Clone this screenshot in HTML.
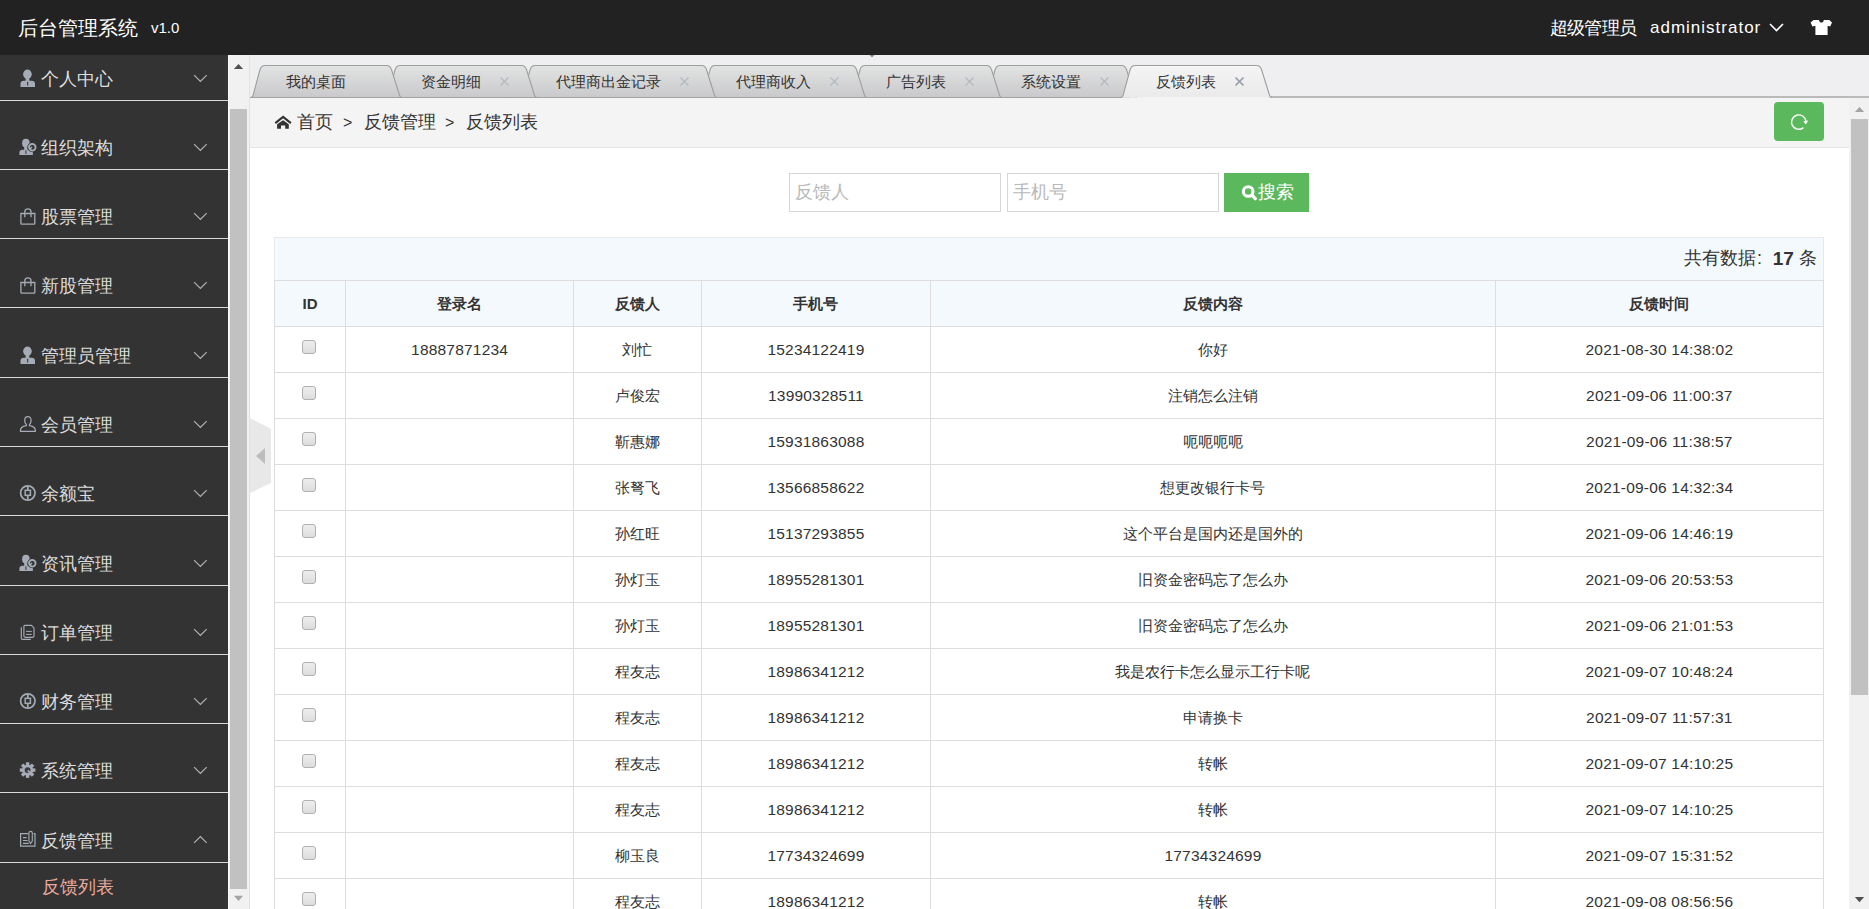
<!DOCTYPE html>
<html><head><meta charset="utf-8"><title>后台管理系统</title>
<style>
*{margin:0;padding:0;box-sizing:border-box}
html,body{width:1869px;height:909px;overflow:hidden;background:#fff;font-family:"Liberation Sans",sans-serif;color:#333}
.abs{position:absolute}
#hdr{position:absolute;left:0;top:0;width:1869px;height:55px;background:#222}
#title{position:absolute;left:18px;top:14px;font-size:20px;line-height:28px;color:#fff;white-space:nowrap}
#ver{position:absolute;left:151px;top:18px;font-size:15px;line-height:20px;color:#fff}
#role{position:absolute;left:1549.5px;top:15px;font-size:18px;line-height:26px;color:#fff;white-space:nowrap;letter-spacing:-0.6px}
#admin{position:absolute;left:1650px;top:15px;font-size:17px;line-height:26px;color:#fff;letter-spacing:1px;white-space:nowrap}
#side{position:absolute;left:0;top:55px;width:228px;height:854px;background:#333;overflow:hidden}
.sline{position:absolute;left:0;width:228px;height:1px;background:#d9d9d9}
.sicon{position:absolute;left:16px;width:24px;height:24px}
.sicon svg{display:block}
.stext{position:absolute;left:41px;font-size:18px;line-height:24px;color:#ddd;white-space:nowrap}
.stext.sub{left:42px;color:#eba99e}
.schev{position:absolute;left:193px;width:15px;height:9px}
.schev svg{display:block}
#sscroll{position:absolute;left:228px;top:55px;width:21px;height:854px;background:#f1f1f1;border-left:1px solid #fafafa}
#sthumb{position:absolute;left:230px;top:109px;width:17px;height:780px;background:#c1c1c1}
#sline2{position:absolute;left:249px;top:55px;width:1px;height:854px;background:#e2e2e2}
#tabs{position:absolute;left:250px;top:55px;width:1619px;height:42px;background:#efeff1}
.tabsvg{position:absolute;left:249px;top:55px}
#tabline{position:absolute;left:1271px;top:96.5px;width:598px;height:1px;background:#a9a9a9}
.tlab{position:absolute;top:71px;font-size:15px;line-height:22px;color:#333;white-space:nowrap}
.tclose{position:absolute;top:77px;width:9px;height:9px}
.tclose svg{display:block}
#crumb{position:absolute;left:250px;top:98px;width:1599px;height:50px;background:#f4f4f4;border-bottom:1px solid #e6e6e6}
.ctext{position:absolute;top:110px;font-size:18px;line-height:24px;color:#333;white-space:nowrap}
#refresh{position:absolute;left:1774px;top:102px;width:50px;height:39px;background:#5cb85c;border-radius:4px}
#content{position:absolute;left:250px;top:148px;width:1599px;height:761px;background:#fff}
#rscroll{position:absolute;left:1849px;top:98px;width:20px;height:811px;background:#f1f1f1}
#rthumb{position:absolute;left:1851px;top:119px;width:17px;height:576px;background:#c1c1c1}
.inp{position:absolute;top:173px;height:39px;border:1px solid #d6d6d6;background:#fff}
.ph{position:absolute;top:180px;font-size:18px;line-height:24px;color:#b9b9b9;white-space:nowrap}
#sbtn{position:absolute;left:1224px;top:173px;width:85px;height:39px;background:#5cb85c}
#tool{position:absolute;left:274px;top:237px;width:1550px;height:89px;background:#f3f9fd;border:1px solid #e8e8e8;border-bottom:none}
.vl{position:absolute;top:280px;width:1px;height:629px;background:#dddddd}
.hl{position:absolute;left:274px;width:1550px;height:1px;background:#dddddd}
.hcell,.cell{position:absolute;top:0;height:46px;line-height:47px;text-align:center;white-space:nowrap;font-size:15px;color:#333}
.hcell{top:280px;font-weight:bold}
.row{position:absolute;left:0;width:1869px;height:46px}
.n{font-size:15.5px;letter-spacing:0.2px}
.cb{position:absolute;left:27.5px;top:14px;width:14px;height:14px;border:1px solid #b0b0b0;border-radius:3px;background:linear-gradient(#eeeeee,#dddddd)}
#handle{position:absolute;left:250px;top:418px}
</style></head><body>
<div id="hdr">
  <div id="title">后台管理系统</div>
  <div id="ver">v1.0</div>
  <div id="role">超级管理员</div>
  <div id="admin">administrator</div>
  <svg class="abs" style="left:1769px;top:23px" width="15" height="9" viewBox="0 0 15 9"><path d="M1 1l6.5 6.5L14 1" fill="none" stroke="#fff" stroke-width="1.6"/></svg>
  <svg class="abs" style="left:1810px;top:19px" width="23" height="16" viewBox="0 0 23 16"><path fill="#fff" d="M0.6 3.6L3.5 0.9H8.9C9.5 2.7 10.3 3.6 11.4 3.6C12.5 3.6 13.3 2.7 13.9 0.9H19.3L22 3.6L20.2 7.6L17.6 6.8V15.9H5.4V6.8L2.4 7.6Z"/></svg>
</div>
<div id="side">
<div class="sline" style="top:45.00px"></div><div class="sicon" style="top:11.30px"><svg width="24" height="24" viewBox="0 0 24 24"><ellipse cx="11.45" cy="8.3" rx="4.3" ry="4.7" fill="#a5acb6"/><path fill="#a5acb6" d="M9.6 11.5h3.7v3.5H9.6z"/><path fill="#a5acb6" d="M4.5 21.1V17.6C4.5 15.9 5.9 14.8 7.6 14.8H15.9C17.6 14.8 19 15.9 19 17.6V21.1z"/><path fill="#3a3a3a" d="M11.1 15.8h1.1v3.7h-1.1z"/></svg></div><div class="stext" style="top:11.70px">个人中心</div><div class="schev" style="top:19.20px"><svg width="15" height="9" viewBox="0 0 15 9"><path d="M1.1 1.2l6.3 6.3 6.3-6.3" fill="none" stroke="#b4b4b4" stroke-width="1.2"/></svg></div><div class="sline" style="top:114.00px"></div><div class="sicon" style="top:81.30px"><svg width="24" height="24" viewBox="0 0 24 24"><ellipse cx="9.9" cy="7.2" rx="3.8" ry="4.4" fill="#a5acb6"/><path fill="#a5acb6" d="M8.2 10.5h3.4v3.5H8.2z"/><path fill="#a5acb6" d="M3.4 19V16.4C3.4 14.8 4.7 13.7 6.3 13.7H14C15.6 13.7 16.9 14.8 16.9 16.4V19z"/><path fill="#3a3a3a" d="M9.4 14.3h1v3.8h-1z"/><circle cx="16.3" cy="11.3" r="4.9" fill="#333"/><circle cx="16.3" cy="11.3" r="3.3" fill="none" stroke="#a5acb6" stroke-width="1.8"/><path d="M13.6 13.2l2.4-2" stroke="#a5acb6" stroke-width="1.6"/></svg></div><div class="stext" style="top:80.70px">组织架构</div><div class="schev" style="top:88.20px"><svg width="15" height="9" viewBox="0 0 15 9"><path d="M1.1 1.2l6.3 6.3 6.3-6.3" fill="none" stroke="#b4b4b4" stroke-width="1.2"/></svg></div><div class="sline" style="top:183.00px"></div><div class="sicon" style="top:149.30px"><svg width="24" height="24" viewBox="0 0 24 24"><path fill="none" stroke="#a5acb6" stroke-width="1.3" d="M4.9 9.5H18.8V19.5Q18.8 20.2 18.1 20.2H5.6Q4.9 20.2 4.9 19.5Z M8.8 13.2V8A3.1 3.1 0 0 1 15 8V13.2"/></svg></div><div class="stext" style="top:149.70px">股票管理</div><div class="schev" style="top:157.20px"><svg width="15" height="9" viewBox="0 0 15 9"><path d="M1.1 1.2l6.3 6.3 6.3-6.3" fill="none" stroke="#b4b4b4" stroke-width="1.2"/></svg></div><div class="sline" style="top:252.00px"></div><div class="sicon" style="top:218.30px"><svg width="24" height="24" viewBox="0 0 24 24"><path fill="none" stroke="#a5acb6" stroke-width="1.3" d="M4.9 9.5H18.8V19.5Q18.8 20.2 18.1 20.2H5.6Q4.9 20.2 4.9 19.5Z M8.8 13.2V8A3.1 3.1 0 0 1 15 8V13.2"/></svg></div><div class="stext" style="top:218.70px">新股管理</div><div class="schev" style="top:226.20px"><svg width="15" height="9" viewBox="0 0 15 9"><path d="M1.1 1.2l6.3 6.3 6.3-6.3" fill="none" stroke="#b4b4b4" stroke-width="1.2"/></svg></div><div class="sline" style="top:322.00px"></div><div class="sicon" style="top:288.30px"><svg width="24" height="24" viewBox="0 0 24 24"><ellipse cx="11.45" cy="8.3" rx="4.3" ry="4.7" fill="#a5acb6"/><path fill="#a5acb6" d="M9.6 11.5h3.7v3.5H9.6z"/><path fill="#a5acb6" d="M4.5 21.1V17.6C4.5 15.9 5.9 14.8 7.6 14.8H15.9C17.6 14.8 19 15.9 19 17.6V21.1z"/><path fill="#3a3a3a" d="M11.1 15.8h1.1v3.7h-1.1z"/></svg></div><div class="stext" style="top:288.70px">管理员管理</div><div class="schev" style="top:296.20px"><svg width="15" height="9" viewBox="0 0 15 9"><path d="M1.1 1.2l6.3 6.3 6.3-6.3" fill="none" stroke="#b4b4b4" stroke-width="1.2"/></svg></div><div class="sline" style="top:391.00px"></div><div class="sicon" style="top:357.30px"><svg width="24" height="24" viewBox="0 0 24 24"><path fill="none" stroke="#a5acb6" stroke-width="1.25" d="M11.9 4.6C9.9 4.6 8.7 6.1 8.7 8.4C8.7 10.2 9.4 11.5 10.3 12.4V13.7C7.2 14.2 4.5 15.6 4.5 18.4V19.4H19.3V18.4C19.3 15.6 16.6 14.2 13.5 13.7V12.4C14.4 11.5 15.1 10.2 15.1 8.4C15.1 6.1 13.9 4.6 11.9 4.6Z"/></svg></div><div class="stext" style="top:357.70px">会员管理</div><div class="schev" style="top:365.20px"><svg width="15" height="9" viewBox="0 0 15 9"><path d="M1.1 1.2l6.3 6.3 6.3-6.3" fill="none" stroke="#b4b4b4" stroke-width="1.2"/></svg></div><div class="sline" style="top:460.00px"></div><div class="sicon" style="top:426.30px"><svg width="24" height="24" viewBox="0 0 24 24"><circle cx="11.8" cy="12" r="7.2" fill="none" stroke="#a5acb6" stroke-width="1.7"/><rect x="9.2" y="9.3" width="5.2" height="5" fill="#333" stroke="#a5acb6" stroke-width="1.5"/><path stroke="#a5acb6" stroke-width="1.7" d="M11.8 5.2V9.3M11.8 14.3V18.8"/></svg></div><div class="stext" style="top:426.70px">余额宝</div><div class="schev" style="top:434.20px"><svg width="15" height="9" viewBox="0 0 15 9"><path d="M1.1 1.2l6.3 6.3 6.3-6.3" fill="none" stroke="#b4b4b4" stroke-width="1.2"/></svg></div><div class="sline" style="top:530.00px"></div><div class="sicon" style="top:497.30px"><svg width="24" height="24" viewBox="0 0 24 24"><ellipse cx="9.9" cy="7.2" rx="3.8" ry="4.4" fill="#a5acb6"/><path fill="#a5acb6" d="M8.2 10.5h3.4v3.5H8.2z"/><path fill="#a5acb6" d="M3.4 19V16.4C3.4 14.8 4.7 13.7 6.3 13.7H14C15.6 13.7 16.9 14.8 16.9 16.4V19z"/><path fill="#3a3a3a" d="M9.4 14.3h1v3.8h-1z"/><circle cx="16.3" cy="11.3" r="4.9" fill="#333"/><circle cx="16.3" cy="11.3" r="3.3" fill="none" stroke="#a5acb6" stroke-width="1.8"/><path d="M13.6 13.2l2.4-2" stroke="#a5acb6" stroke-width="1.6"/></svg></div><div class="stext" style="top:496.70px">资讯管理</div><div class="schev" style="top:504.20px"><svg width="15" height="9" viewBox="0 0 15 9"><path d="M1.1 1.2l6.3 6.3 6.3-6.3" fill="none" stroke="#b4b4b4" stroke-width="1.2"/></svg></div><div class="sline" style="top:599.00px"></div><div class="sicon" style="top:565.30px"><svg width="24" height="24" viewBox="0 0 24 24"><path fill="none" stroke="#a5acb6" stroke-width="1.15" d="M5.3 7.2V18.2Q5.3 19.4 6.5 19.4H14.8"/><path fill="none" stroke="#a5acb6" stroke-width="1.15" d="M8.9 5.3H15.4L18 7.9V16.1Q18 17.3 16.8 17.3H9.1Q7.9 17.3 7.9 16.1V6.3Q7.9 5.3 8.9 5.3Z"/><path stroke="#a5acb6" stroke-width="1" d="M10 11.4h5.8M10 14.4h5.8"/></svg></div><div class="stext" style="top:565.70px">订单管理</div><div class="schev" style="top:573.20px"><svg width="15" height="9" viewBox="0 0 15 9"><path d="M1.1 1.2l6.3 6.3 6.3-6.3" fill="none" stroke="#b4b4b4" stroke-width="1.2"/></svg></div><div class="sline" style="top:668.00px"></div><div class="sicon" style="top:634.30px"><svg width="24" height="24" viewBox="0 0 24 24"><circle cx="11.8" cy="12" r="7.2" fill="none" stroke="#a5acb6" stroke-width="1.7"/><rect x="9.2" y="9.3" width="5.2" height="5" fill="#333" stroke="#a5acb6" stroke-width="1.5"/><path stroke="#a5acb6" stroke-width="1.7" d="M11.8 5.2V9.3M11.8 14.3V18.8"/></svg></div><div class="stext" style="top:634.70px">财务管理</div><div class="schev" style="top:642.20px"><svg width="15" height="9" viewBox="0 0 15 9"><path d="M1.1 1.2l6.3 6.3 6.3-6.3" fill="none" stroke="#b4b4b4" stroke-width="1.2"/></svg></div><div class="sline" style="top:737.00px"></div><div class="sicon" style="top:703.30px"><svg width="24" height="24" viewBox="0 0 24 24"><g transform="translate(11.6 12.1)" fill="#a5acb6"><circle r="5.6"/><rect x="-1.7" y="-7.8" width="3.4" height="3.6" transform="rotate(0)"/><rect x="-1.7" y="-7.8" width="3.4" height="3.6" transform="rotate(45)"/><rect x="-1.7" y="-7.8" width="3.4" height="3.6" transform="rotate(90)"/><rect x="-1.7" y="-7.8" width="3.4" height="3.6" transform="rotate(135)"/><rect x="-1.7" y="-7.8" width="3.4" height="3.6" transform="rotate(180)"/><rect x="-1.7" y="-7.8" width="3.4" height="3.6" transform="rotate(225)"/><rect x="-1.7" y="-7.8" width="3.4" height="3.6" transform="rotate(270)"/><rect x="-1.7" y="-7.8" width="3.4" height="3.6" transform="rotate(315)"/><circle r="2.9" fill="#3a3a3a"/><path d="M-0.6 0.9L3.9 5.2 5.1 4 0.7 -0.4z" /></g></svg></div><div class="stext" style="top:703.70px">系统管理</div><div class="schev" style="top:711.20px"><svg width="15" height="9" viewBox="0 0 15 9"><path d="M1.1 1.2l6.3 6.3 6.3-6.3" fill="none" stroke="#b4b4b4" stroke-width="1.2"/></svg></div><div class="sline" style="top:807.00px"></div><div class="sicon" style="top:773.30px"><svg width="24" height="24" viewBox="0 0 24 24"><path fill="none" stroke="#a5acb6" stroke-width="1.2" d="M12 5.6H4.6V18.2H19V5.6H17.6"/><path stroke="#a5acb6" stroke-width="1.1" d="M6.9 9.6h3.7M6.9 12.5h4.7M6.9 15.4h5.8"/><path fill="none" stroke="#a5acb6" stroke-width="1.1" d="M12.9 13V5.1Q12.9 3.4 14.6 3.4Q16.3 3.4 16.3 5.1V13L14.6 15.6Z"/></svg></div><div class="stext" style="top:773.70px">反馈管理</div><div class="schev" style="top:780.20px"><svg width="15" height="9" viewBox="0 0 15 9"><path d="M1.1 7.8l6.3-6.3 6.3 6.3" fill="none" stroke="#b4b4b4" stroke-width="1.2"/></svg></div><div class="stext sub" style="top:819.50px">反馈列表</div>
</div>
<div id="sscroll"></div>
<div id="sthumb"></div>
<svg class="abs" style="left:233px;top:63px" width="11" height="7" viewBox="0 0 11 7"><path d="M0.9 6L5.5 0.9 10.1 6z" fill="#505050"/></svg>
<svg class="abs" style="left:233px;top:895px" width="11" height="7" viewBox="0 0 11 7"><path d="M0.9 0.8L5.5 6 10.1 0.8z" fill="#a3a3a3"/></svg>
<div id="sline2"></div>
<div id="tabs"></div>
<svg class="abs" style="left:869px;top:55px" width="6" height="3" viewBox="0 0 6 3"><path d="M0.5 0L3 2.5 5.5 0z" fill="#8a8a8a"/></svg>
<svg class="tabsvg" width="1620" height="43" viewBox="249 55 1620 43"><defs><linearGradient id="tg" x1="0" y1="0" x2="0" y2="1"><stop offset="0" stop-color="#e2e3e3"/><stop offset="1" stop-color="#c9c9cb"/></linearGradient><linearGradient id="ta" x1="0" y1="0" x2="0" y2="1"><stop offset="0" stop-color="#f4f4f5"/><stop offset="1" stop-color="#eaeaea"/></linearGradient></defs><path d="M985.60 97.5 C986.80 97.5 987.60 96.8 988.20 95.2 L995.10 69.5 C996.10 66.8 997.40 65.5 999.90 65.5 L1121.70 65.5 C1124.20 65.5 1125.50 66.8 1126.50 69.5 L1134.50 95.2 C1135.10 96.8 1135.90 97.5 1137.10 97.5 Z" fill="url(#tg)"/><path d="M985.60 97.5 C986.80 97.5 987.60 96.8 988.20 95.2 L995.10 69.5 C996.10 66.8 997.40 65.5 999.90 65.5 L1121.70 65.5 C1124.20 65.5 1125.50 66.8 1126.50 69.5 L1134.50 95.2 C1135.10 96.8 1135.90 97.5 1137.10 97.5" fill="none" stroke="#9e9e9e" stroke-width="1.1"/><path d="M850.60 97.5 C851.80 97.5 852.60 96.8 853.20 95.2 L860.10 69.5 C861.10 66.8 862.40 65.5 864.90 65.5 L986.70 65.5 C989.20 65.5 990.50 66.8 991.50 69.5 L999.50 95.2 C1000.10 96.8 1000.90 97.5 1002.10 97.5 Z" fill="url(#tg)"/><path d="M850.60 97.5 C851.80 97.5 852.60 96.8 853.20 95.2 L860.10 69.5 C861.10 66.8 862.40 65.5 864.90 65.5 L986.70 65.5 C989.20 65.5 990.50 66.8 991.50 69.5 L999.50 95.2 C1000.10 96.8 1000.90 97.5 1002.10 97.5" fill="none" stroke="#9e9e9e" stroke-width="1.1"/><path d="M700.60 97.5 C701.80 97.5 702.60 96.8 703.20 95.2 L710.10 69.5 C711.10 66.8 712.40 65.5 714.90 65.5 L851.70 65.5 C854.20 65.5 855.50 66.8 856.50 69.5 L864.50 95.2 C865.10 96.8 865.90 97.5 867.10 97.5 Z" fill="url(#tg)"/><path d="M700.60 97.5 C701.80 97.5 702.60 96.8 703.20 95.2 L710.10 69.5 C711.10 66.8 712.40 65.5 714.90 65.5 L851.70 65.5 C854.20 65.5 855.50 66.8 856.50 69.5 L864.50 95.2 C865.10 96.8 865.90 97.5 867.10 97.5" fill="none" stroke="#9e9e9e" stroke-width="1.1"/><path d="M520.60 97.5 C521.80 97.5 522.60 96.8 523.20 95.2 L530.10 69.5 C531.10 66.8 532.40 65.5 534.90 65.5 L701.70 65.5 C704.20 65.5 705.50 66.8 706.50 69.5 L714.50 95.2 C715.10 96.8 715.90 97.5 717.10 97.5 Z" fill="url(#tg)"/><path d="M520.60 97.5 C521.80 97.5 522.60 96.8 523.20 95.2 L530.10 69.5 C531.10 66.8 532.40 65.5 534.90 65.5 L701.70 65.5 C704.20 65.5 705.50 66.8 706.50 69.5 L714.50 95.2 C715.10 96.8 715.90 97.5 717.10 97.5" fill="none" stroke="#9e9e9e" stroke-width="1.1"/><path d="M385.60 97.5 C386.80 97.5 387.60 96.8 388.20 95.2 L395.10 69.5 C396.10 66.8 397.40 65.5 399.90 65.5 L521.70 65.5 C524.20 65.5 525.50 66.8 526.50 69.5 L534.50 95.2 C535.10 96.8 535.90 97.5 537.10 97.5 Z" fill="url(#tg)"/><path d="M385.60 97.5 C386.80 97.5 387.60 96.8 388.20 95.2 L395.10 69.5 C396.10 66.8 397.40 65.5 399.90 65.5 L521.70 65.5 C524.20 65.5 525.50 66.8 526.50 69.5 L534.50 95.2 C535.10 96.8 535.90 97.5 537.10 97.5" fill="none" stroke="#9e9e9e" stroke-width="1.1"/><path d="M250.50 97.5 C251.70 97.5 252.50 96.8 253.10 95.2 L260.00 69.5 C261.00 66.8 262.30 65.5 264.80 65.5 L386.70 65.5 C389.20 65.5 390.50 66.8 391.50 69.5 L399.50 95.2 C400.10 96.8 400.90 97.5 402.10 97.5 Z" fill="url(#tg)"/><path d="M250.50 97.5 C251.70 97.5 252.50 96.8 253.10 95.2 L260.00 69.5 C261.00 66.8 262.30 65.5 264.80 65.5 L386.70 65.5 C389.20 65.5 390.50 66.8 391.50 69.5 L399.50 95.2 C400.10 96.8 400.90 97.5 402.10 97.5" fill="none" stroke="#9e9e9e" stroke-width="1.1"/><rect x="250" y="97" width="880" height="1" fill="#a2a2a2"/><rect x="1268" y="96" width="601" height="2" fill="#bababa"/><path d="M1120.60 97.5 C1121.80 97.5 1122.60 96.8 1123.20 95.2 L1130.10 69.5 C1131.10 66.8 1132.40 65.5 1134.90 65.5 L1256.70 65.5 C1259.20 65.5 1260.50 66.8 1261.50 69.5 L1269.50 95.2 C1270.10 96.8 1270.90 97.5 1272.10 97.5 Z" fill="url(#ta)"/><path d="M1121.10 98 H1271.60" stroke="#f2f2f3" stroke-width="1.2"/><path d="M1134.90 67 H1256.70" stroke="#f8f8f8" stroke-width="1"/><path d="M1120.60 97.5 C1121.80 97.5 1122.60 96.8 1123.20 95.2 L1130.10 69.5 C1131.10 66.8 1132.40 65.5 1134.90 65.5 L1256.70 65.5 C1259.20 65.5 1260.50 66.8 1261.50 69.5 L1269.50 95.2 C1270.10 96.8 1270.90 97.5 1272.10 97.5" fill="none" stroke="#9e9e9e" stroke-width="1.1"/></svg>
<div class="tlab" style="left:285.7px">我的桌面</div><div class="tlab" style="left:420.8px">资金明细</div><div class="tclose" style="left:500.1px"><svg width="9" height="9" viewBox="0 0 9 9"><path d="M0.5 0.5l8 8M8.5 0.5l-8 8" stroke="#b3bac2" stroke-width="1.3"/></svg></div><div class="tlab" style="left:555.8px">代理商出金记录</div><div class="tclose" style="left:680.1px"><svg width="9" height="9" viewBox="0 0 9 9"><path d="M0.5 0.5l8 8M8.5 0.5l-8 8" stroke="#b3bac2" stroke-width="1.3"/></svg></div><div class="tlab" style="left:735.8px">代理商收入</div><div class="tclose" style="left:830.1px"><svg width="9" height="9" viewBox="0 0 9 9"><path d="M0.5 0.5l8 8M8.5 0.5l-8 8" stroke="#b3bac2" stroke-width="1.3"/></svg></div><div class="tlab" style="left:885.8px">广告列表</div><div class="tclose" style="left:965.1px"><svg width="9" height="9" viewBox="0 0 9 9"><path d="M0.5 0.5l8 8M8.5 0.5l-8 8" stroke="#b3bac2" stroke-width="1.3"/></svg></div><div class="tlab" style="left:1020.8px">系统设置</div><div class="tclose" style="left:1100.1px"><svg width="9" height="9" viewBox="0 0 9 9"><path d="M0.5 0.5l8 8M8.5 0.5l-8 8" stroke="#b3bac2" stroke-width="1.3"/></svg></div><div class="tlab" style="left:1155.8px">反馈列表</div><div class="tclose" style="left:1235.1px"><svg width="9" height="9" viewBox="0 0 9 9"><path d="M0.5 0.5l8 8M8.5 0.5l-8 8" stroke="#9ba2aa" stroke-width="1.6"/></svg></div>
<div id="crumb"></div>
<svg class="abs" style="left:272px;top:112px" width="22" height="20" viewBox="0 0 22 20"><path d="M3.3 11.1L11.1 4.9 18.9 11.1" fill="none" stroke="#333" stroke-width="2.1"/><path fill="#333" d="M5.1 16.7V12.3L11.1 8.2 16.8 12.3V16.7H13.2V13.6H9V16.7Z"/></svg>
<div class="ctext" style="left:297px">首页</div>
<div class="ctext" style="left:343px;font-size:16px;top:111px">&gt;</div>
<div class="ctext" style="left:364px">反馈管理</div>
<div class="ctext" style="left:445px;font-size:16px;top:111px">&gt;</div>
<div class="ctext" style="left:466px">反馈列表</div>
<div id="refresh"><svg class="abs" style="left:0;top:0" width="50" height="39" viewBox="0 0 50 39"><path d="M29.4 25.6A7.2 7.2 0 1 1 31.9 19.2" fill="none" stroke="#fff" stroke-width="1.4"/><path d="M29.3 19.2L34.2 18.4 31.8 22.4z" fill="#fff"/></svg></div>
<div id="content"></div>
<div class="inp" style="left:789px;width:212px"></div>
<div class="ph" style="left:795px">反馈人</div>
<div class="inp" style="left:1007px;width:212px"></div>
<div class="ph" style="left:1013px">手机号</div>
<div id="sbtn"><svg class="abs" style="left:17px;top:12px" width="16" height="16" viewBox="0 0 16 16"><circle cx="7.2" cy="6.5" r="4.8" fill="none" stroke="#fff" stroke-width="3.1"/><path d="M10.9 10.2l3.4 3.5" stroke="#fff" stroke-width="3.2" stroke-linecap="round"/></svg><div class="abs" style="left:34px;top:7px;font-size:18px;line-height:24px;color:#fff;white-space:nowrap">搜索</div></div>
<div id="tool"></div>
<div class="abs" style="left:1684px;top:246px;font-size:18px;line-height:24px;color:#333;white-space:nowrap">共有数据</div><div class="abs" style="left:1757px;top:246px;font-size:18px;line-height:24px;color:#333">:</div><div class="abs" style="left:1772.7px;top:247px;font-size:19px;line-height:24px;color:#333;font-weight:bold">17</div><div class="abs" style="left:1798.5px;top:246px;font-size:18px;line-height:24px;color:#333">条</div>
<div class="abs" style="left:274px;top:280px;width:1550px;height:46px;background:#f3f9fd"></div>
<div class="hl" style="top:280px"></div><div class="hl" style="top:326px"></div><div class="hl" style="top:372px"></div><div class="hl" style="top:418px"></div><div class="hl" style="top:464px"></div><div class="hl" style="top:510px"></div><div class="hl" style="top:556px"></div><div class="hl" style="top:602px"></div><div class="hl" style="top:648px"></div><div class="hl" style="top:694px"></div><div class="hl" style="top:740px"></div><div class="hl" style="top:786px"></div><div class="hl" style="top:832px"></div><div class="hl" style="top:878px"></div><div class="hl" style="top:924px"></div>
<div class="vl" style="left:274px"></div><div class="vl" style="left:345px"></div><div class="vl" style="left:573px"></div><div class="vl" style="left:701px"></div><div class="vl" style="left:930px"></div><div class="vl" style="left:1495px"></div><div class="vl" style="left:1823px"></div>
<div class="hcell" style="left:274.5px;width:71.0px">ID</div><div class="hcell" style="left:345.5px;width:228.2px">登录名</div><div class="hcell" style="left:573.7px;width:127.6px">反馈人</div><div class="hcell" style="left:701.3px;width:229.3px">手机号</div><div class="hcell" style="left:930.6px;width:564.8px">反馈内容</div><div class="hcell" style="left:1495.4px;width:328.0px">反馈时间</div>
<div class="row" style="top:326px"><div class="cell" style="left:274.5px;width:71.0px"><span class="cb"></span></div><div class="cell" style="left:345.5px;width:228.2px"><span class="n">18887871234</span></div><div class="cell" style="left:573.7px;width:127.6px">刘忙</div><div class="cell" style="left:701.3px;width:229.3px"><span class="n">15234122419</span></div><div class="cell" style="left:930.6px;width:564.8px">你好</div><div class="cell" style="left:1495.4px;width:328.0px"><span class="n">2021-08-30 14:38:02</span></div></div><div class="row" style="top:372px"><div class="cell" style="left:274.5px;width:71.0px"><span class="cb"></span></div><div class="cell" style="left:345.5px;width:228.2px"></div><div class="cell" style="left:573.7px;width:127.6px">卢俊宏</div><div class="cell" style="left:701.3px;width:229.3px"><span class="n">13990328511</span></div><div class="cell" style="left:930.6px;width:564.8px">注销怎么注销</div><div class="cell" style="left:1495.4px;width:328.0px"><span class="n">2021-09-06 11:00:37</span></div></div><div class="row" style="top:418px"><div class="cell" style="left:274.5px;width:71.0px"><span class="cb"></span></div><div class="cell" style="left:345.5px;width:228.2px"></div><div class="cell" style="left:573.7px;width:127.6px">靳惠娜</div><div class="cell" style="left:701.3px;width:229.3px"><span class="n">15931863088</span></div><div class="cell" style="left:930.6px;width:564.8px">呃呃呃呃</div><div class="cell" style="left:1495.4px;width:328.0px"><span class="n">2021-09-06 11:38:57</span></div></div><div class="row" style="top:464px"><div class="cell" style="left:274.5px;width:71.0px"><span class="cb"></span></div><div class="cell" style="left:345.5px;width:228.2px"></div><div class="cell" style="left:573.7px;width:127.6px">张弩飞</div><div class="cell" style="left:701.3px;width:229.3px"><span class="n">13566858622</span></div><div class="cell" style="left:930.6px;width:564.8px">想更改银行卡号</div><div class="cell" style="left:1495.4px;width:328.0px"><span class="n">2021-09-06 14:32:34</span></div></div><div class="row" style="top:510px"><div class="cell" style="left:274.5px;width:71.0px"><span class="cb"></span></div><div class="cell" style="left:345.5px;width:228.2px"></div><div class="cell" style="left:573.7px;width:127.6px">孙红旺</div><div class="cell" style="left:701.3px;width:229.3px"><span class="n">15137293855</span></div><div class="cell" style="left:930.6px;width:564.8px">这个平台是国内还是国外的</div><div class="cell" style="left:1495.4px;width:328.0px"><span class="n">2021-09-06 14:46:19</span></div></div><div class="row" style="top:556px"><div class="cell" style="left:274.5px;width:71.0px"><span class="cb"></span></div><div class="cell" style="left:345.5px;width:228.2px"></div><div class="cell" style="left:573.7px;width:127.6px">孙灯玉</div><div class="cell" style="left:701.3px;width:229.3px"><span class="n">18955281301</span></div><div class="cell" style="left:930.6px;width:564.8px">旧资金密码忘了怎么办</div><div class="cell" style="left:1495.4px;width:328.0px"><span class="n">2021-09-06 20:53:53</span></div></div><div class="row" style="top:602px"><div class="cell" style="left:274.5px;width:71.0px"><span class="cb"></span></div><div class="cell" style="left:345.5px;width:228.2px"></div><div class="cell" style="left:573.7px;width:127.6px">孙灯玉</div><div class="cell" style="left:701.3px;width:229.3px"><span class="n">18955281301</span></div><div class="cell" style="left:930.6px;width:564.8px">旧资金密码忘了怎么办</div><div class="cell" style="left:1495.4px;width:328.0px"><span class="n">2021-09-06 21:01:53</span></div></div><div class="row" style="top:648px"><div class="cell" style="left:274.5px;width:71.0px"><span class="cb"></span></div><div class="cell" style="left:345.5px;width:228.2px"></div><div class="cell" style="left:573.7px;width:127.6px">程友志</div><div class="cell" style="left:701.3px;width:229.3px"><span class="n">18986341212</span></div><div class="cell" style="left:930.6px;width:564.8px">我是农行卡怎么显示工行卡呢</div><div class="cell" style="left:1495.4px;width:328.0px"><span class="n">2021-09-07 10:48:24</span></div></div><div class="row" style="top:694px"><div class="cell" style="left:274.5px;width:71.0px"><span class="cb"></span></div><div class="cell" style="left:345.5px;width:228.2px"></div><div class="cell" style="left:573.7px;width:127.6px">程友志</div><div class="cell" style="left:701.3px;width:229.3px"><span class="n">18986341212</span></div><div class="cell" style="left:930.6px;width:564.8px">申请换卡</div><div class="cell" style="left:1495.4px;width:328.0px"><span class="n">2021-09-07 11:57:31</span></div></div><div class="row" style="top:740px"><div class="cell" style="left:274.5px;width:71.0px"><span class="cb"></span></div><div class="cell" style="left:345.5px;width:228.2px"></div><div class="cell" style="left:573.7px;width:127.6px">程友志</div><div class="cell" style="left:701.3px;width:229.3px"><span class="n">18986341212</span></div><div class="cell" style="left:930.6px;width:564.8px">转帐</div><div class="cell" style="left:1495.4px;width:328.0px"><span class="n">2021-09-07 14:10:25</span></div></div><div class="row" style="top:786px"><div class="cell" style="left:274.5px;width:71.0px"><span class="cb"></span></div><div class="cell" style="left:345.5px;width:228.2px"></div><div class="cell" style="left:573.7px;width:127.6px">程友志</div><div class="cell" style="left:701.3px;width:229.3px"><span class="n">18986341212</span></div><div class="cell" style="left:930.6px;width:564.8px">转帐</div><div class="cell" style="left:1495.4px;width:328.0px"><span class="n">2021-09-07 14:10:25</span></div></div><div class="row" style="top:832px"><div class="cell" style="left:274.5px;width:71.0px"><span class="cb"></span></div><div class="cell" style="left:345.5px;width:228.2px"></div><div class="cell" style="left:573.7px;width:127.6px">柳玉良</div><div class="cell" style="left:701.3px;width:229.3px"><span class="n">17734324699</span></div><div class="cell" style="left:930.6px;width:564.8px"><span class="n">17734324699</span></div><div class="cell" style="left:1495.4px;width:328.0px"><span class="n">2021-09-07 15:31:52</span></div></div><div class="row" style="top:878px"><div class="cell" style="left:274.5px;width:71.0px"><span class="cb"></span></div><div class="cell" style="left:345.5px;width:228.2px"></div><div class="cell" style="left:573.7px;width:127.6px">程友志</div><div class="cell" style="left:701.3px;width:229.3px"><span class="n">18986341212</span></div><div class="cell" style="left:930.6px;width:564.8px">转帐</div><div class="cell" style="left:1495.4px;width:328.0px"><span class="n">2021-09-08 08:56:56</span></div></div>
<div id="handle"><svg width="22" height="76" viewBox="0 0 22 76"><path d="M0 0L21 11V65L0 75z" fill="#e8e8e8"/><path d="M15 30V46L6 38z" fill="#bcbcbc"/></svg></div>
<div id="rscroll"></div>
<div id="rthumb"></div>
<svg class="abs" style="left:1854px;top:106px" width="11" height="7" viewBox="0 0 11 7"><path d="M0.9 6L5.5 1 10.1 6z" fill="#a3a3a3"/></svg>
<svg class="abs" style="left:1854px;top:896px" width="11" height="7" viewBox="0 0 11 7"><path d="M0.9 1L5.5 6.2 10.1 1z" fill="#505050"/></svg>
</body></html>
